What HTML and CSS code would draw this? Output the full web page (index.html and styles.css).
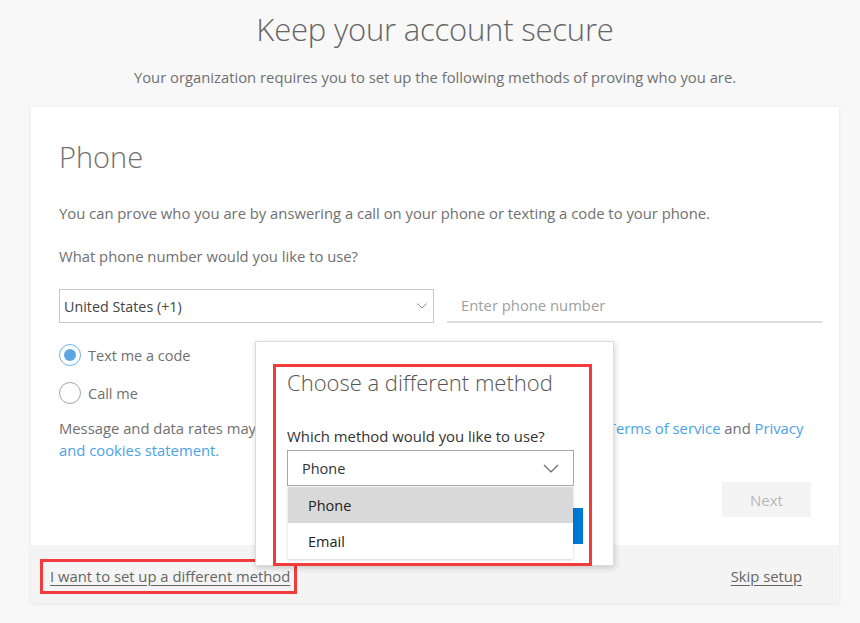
FILE: index.html
```html
<!DOCTYPE html>
<html>
<head>
<meta charset="utf-8">
<link rel="stylesheet" href="styles.css">
</head>
<body>
<div class="page">
  <header class="page-head">
    <h1 class="page-title">Keep your account secure</h1>
    <p class="page-sub">Your organization requires you to set up the following methods of proving who you are.</p>
  </header>
  <div class="card">
    <div class="card-body">
      <h2 class="card-title">Phone</h2>
      <p class="para p-intro">You can prove who you are by answering a call on your phone or texting a code to your phone.</p>
      <p class="para p-question">What phone number would you like to use?</p>
      <div class="phone-row">
        <div class="country-select">
          <span>United States (+1)</span>
          <svg class="chev-small" width="10" height="6" viewBox="0 0 10 6"><path d="M0.5 0.5 L5 5 L9.5 0.5" fill="none" stroke="#8a8a8a" stroke-width="1"/></svg>
        </div>
        <div class="phone-input">Enter phone number</div>
      </div>
      <div class="radios">
        <div class="radio-row"><span class="radio checked"></span><span>Text me a code</span></div>
        <div class="radio-row"><span class="radio"></span><span>Call me</span></div>
      </div>
      <p class="para p-terms">Message and data rates may apply. Choosing Next means that you agree to the <a class="link">Terms of service</a> and <a class="link">Privacy and cookies statement.</a></p>
      <div class="actions"><button class="next-btn">Next</button></div>
    </div>
    <div class="card-footer">
      <a class="footer-link boxed">I want to set up a different method</a>
      <a class="footer-link">Skip setup</a>
    </div>

    <div class="dialog">
      <div class="dialog-inner">
        <h3 class="dialog-title">Choose a different method</h3>
        <p class="dialog-label">Which method would you like to use?</p>
        <div class="method-select">
          <span>Phone</span>
          <svg width="16" height="9" viewBox="0 0 16 9"><path d="M1 1 L8 8 L15 1" fill="none" stroke="#666" stroke-width="1.2"/></svg>
        </div>
        <div class="dialog-btn"></div>
        <ul class="method-list">
          <li class="opt selected">Phone</li>
          <li class="opt">Email</li>
        </ul>
      </div>
    </div>
  </div>
</div>
</body>
</html>
```
FILE: styles.css
```css
* { box-sizing: border-box; }
html, body { margin: 0; padding: 0; }
body {
  background: #f8f8f8;
  font-family: "Open Sans", "Noto Sans", sans-serif;
  color: #666;
  width: 860px;
  height: 623px;
  overflow: hidden;
}
.page { padding-top: 9px; }
.page-head {
  margin-left: 31px;
  width: 808px;
  text-align: center;
}
.page-title {
  margin: 0;
  font-weight: 300;
  font-size: 31px;
  line-height: 40px;
  color: #666;
  letter-spacing: -0.2px;
}
.page-sub {
  margin: 18px 0 0;
  font-size: 14.8px;
  line-height: 20px;
  color: #707070;
}
.card {
  position: relative;
  margin: 20px 0 0 31px;
  width: 808px;
  background: #fff;
  box-shadow: 0 1px 4px rgba(0,0,0,0.08);
}
.card-body {
  padding: 30px 17px 28px 28px;
  display: flex;
  flex-direction: column;
}
.card-title {
  margin: 0;
  font-weight: 300;
  font-size: 29px;
  line-height: 40px;
  color: #707070;
}
.para {
  margin: 0;
  font-size: 14.8px;
  line-height: 22px;
  color: #707070;
}
.p-intro { margin-top: 25px; }
.p-question { margin-top: 21px; }
.phone-row {
  display: flex;
  gap: 13px;
  margin-top: 22px;
}
.country-select {
  width: 375px;
  height: 34px;
  border: 1px solid #c8c8c8;
  display: flex;
  align-items: center;
  justify-content: space-between;
  padding: 0 6px 0 4px;
  font-size: 14.3px;
  color: #444;
}
.phone-input {
  flex: 1;
  height: 34px;
  border-bottom: 2px solid #ddd;
  display: flex;
  align-items: center;
  padding-left: 14px;
  font-size: 14.8px;
  color: #a0a0a0;
}
.radios {
  display: flex;
  flex-direction: column;
  gap: 16px;
  margin-top: 21px;
}
.radio-row {
  display: flex;
  align-items: center;
  gap: 7px;
  font-size: 14.5px;
  color: #707070;
  height: 22px;
}
.radio {
  width: 22px;
  height: 22px;
  border-radius: 50%;
  border: 1.5px solid #a6a6a6;
  display: flex;
  align-items: center;
  justify-content: center;
}
.radio.checked { border-color: #6fb1e6; }
.radio.checked::after {
  content: "";
  width: 12px;
  height: 12px;
  border-radius: 50%;
  background: #5ea6e2;
}
.p-terms { margin-top: 13px; width: 760px; }
.link { color: #4aa3e6; text-decoration: none; }
.actions {
  display: flex;
  justify-content: flex-end;
  margin-top: 21px;
  padding-right: 11px;
}
.next-btn {
  width: 89px;
  height: 35px;
  border: none;
  background: #f4f4f4;
  color: #b8b8b8;
  font-family: inherit;
  font-size: 15px;
}
.card-footer {
  background: #f4f4f4;
  height: 58px;
  display: flex;
  align-items: center;
  justify-content: space-between;
  padding: 4px 37px 0 9px;
}
.footer-link {
  font-size: 14.8px;
  color: #666;
  text-decoration: underline;
  text-underline-offset: 3px;
}
.footer-link.boxed {
  padding: 4px 4px 5px 7px;
  border: 3px solid #f23b3b;
}

/* dialog overlay */
.dialog {
  position: absolute;
  left: 224px;
  top: 234px;
  width: 359px;
  height: 225px;
  background: #fff;
  border: 1px solid #dcdcdc;
  box-shadow: 1px 2px 6px rgba(0,0,0,0.18);
  padding: 22px 21px 0 17px;
}
.dialog-inner {
  position: relative;
  height: 202px;
  border: 3px solid #f23b3b;
  padding: 0 15px 0 11px;
}
.dialog-title {
  margin: 0;
  font-weight: 300;
  font-size: 22px;
  line-height: 30px;
  color: #555;
}
.dialog-label {
  margin: 29px 0 0;
  font-size: 14.9px;
  line-height: 20px;
  color: #333;
}
.method-select {
  margin-top: 4px;
  height: 36px;
  border: 1px solid #a6a6a6;
  display: flex;
  align-items: center;
  justify-content: space-between;
  padding: 0 14px 0 14px;
  font-size: 14.5px;
  color: #333;
}
.dialog-btn {
  position: absolute;
  right: 6px;
  top: 141px;
  width: 80px;
  height: 36px;
  background: #0078d4;
}
.method-list {
  position: absolute;
  left: 12px;
  top: 120px;
  width: 285px;
  margin: 0;
  padding: 0;
  list-style: none;
  background: #fff;
  box-shadow: 0 1px 3px rgba(0,0,0,0.18);
}
.opt {
  height: 36px;
  display: flex;
  align-items: center;
  padding-left: 20px;
  font-size: 14.5px;
  color: #222;
}
.opt.selected { background: #d9d9d9; }
```
